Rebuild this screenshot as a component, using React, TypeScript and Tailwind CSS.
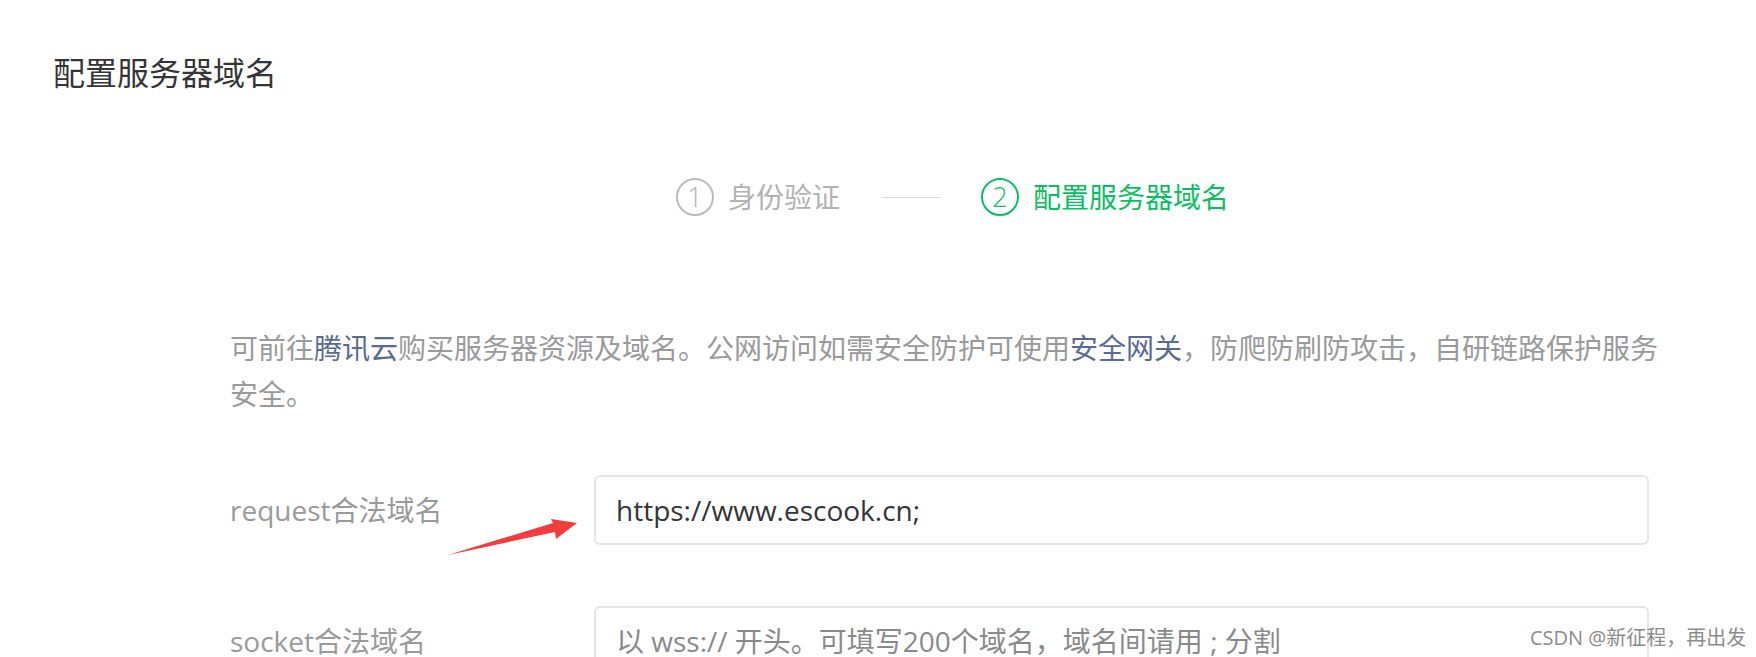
import React from "react";

const FONT = '"Open Sans", "Noto Sans CJK SC", sans-serif';

function StepCircle({ n, active }: { n: number; active?: boolean }) {
  return (
    <div
      className={
        active
          ? "w-[38px] h-[38px] rounded-full border-2 border-[#07c160] text-[#07c160] flex items-center justify-center text-[27px] leading-none font-light"
          : "w-[38px] h-[38px] rounded-full border-2 border-[#bcbcbc] text-[#b2b2b2] flex items-center justify-center text-[27px] leading-none font-light"
      }
    >
      <span className="-mt-[2px]">{n}</span>
    </div>
  );
}

export default function App() {
  return (
    <div
      className="relative w-[1756px] h-[657px] bg-white overflow-hidden"
      style={{ fontFamily: FONT }}
    >
      {/* Title */}
      <div className="pt-[53px] pl-[53px] h-[93px]">
        <div className="text-[32px] leading-[40px] text-[#353535]">配置服务器域名</div>
      </div>

      {/* Steps */}
      <div className="mt-[84px] pl-[676px] flex items-center h-[40px]">
        <StepCircle n={1} />
        <span className="ml-[14px] text-[28px] leading-[40px] text-[#b2b2b2]">身份验证</span>
        <div className="ml-[42px] w-[59px] h-[1px] bg-[#dcdcdc]" />
        <div className="ml-[40px]">
          <StepCircle n={2} active />
        </div>
        <span className="ml-[14px] text-[28px] leading-[40px] text-[#07c160]">配置服务器域名</span>
      </div>

      {/* Description */}
      <div className="mt-[108px] pl-[230px]">
        <p className="w-[1440px] text-[28px] leading-[46px] text-[#9a9a9a]">
          可前往<span className="text-[#576b95]">腾讯云</span>购买服务器资源及域名。公网访问如需安全防护可使用
          <span className="text-[#576b95]">安全网关</span>，防爬防刷防攻击，自研链路保护服务安全。
        </p>
      </div>

      {/* Form rows */}
      <div className="mt-[58px] pl-[230px] flex flex-col gap-[61px]">
        <div className="flex items-center">
          <div className="w-[364px] text-[28px] text-[#9a9a9a] leading-[40px]">request合法域名</div>
          <div className="w-[1055px] h-[70px] border-2 border-[#e6e6e8] rounded-[6px] flex items-center pl-[20px] text-[28px] text-[#353535]">
            https://www.escook.cn;
          </div>
        </div>
        <div className="flex items-center">
          <div className="w-[364px] text-[28px] text-[#9a9a9a] leading-[40px]">socket合法域名</div>
          <div className="w-[1055px] h-[70px] border-2 border-[#e6e6e8] rounded-[6px] flex items-center pl-[20px] text-[28px] text-[#8a8a8a]">
            以 wss:// 开头。可填写200个域名，域名间请用 ; 分割
          </div>
        </div>
      </div>

      {/* Red annotation arrow */}
      <svg
        className="absolute left-0 top-0 pointer-events-none"
        width="1756"
        height="657"
        viewBox="0 0 1756 657"
      >
        <polygon
          points="448,555 553,523 551,519 577,523 556,539 555,532"
          fill="#f43c3c"
        />
      </svg>

      {/* Watermark */}
      <div className="absolute left-[1530px] top-[624px] text-[20px] leading-[28px] text-[#8c8c8c] whitespace-nowrap">
        CSDN @新征程，再出发
      </div>
    </div>
  );
}
